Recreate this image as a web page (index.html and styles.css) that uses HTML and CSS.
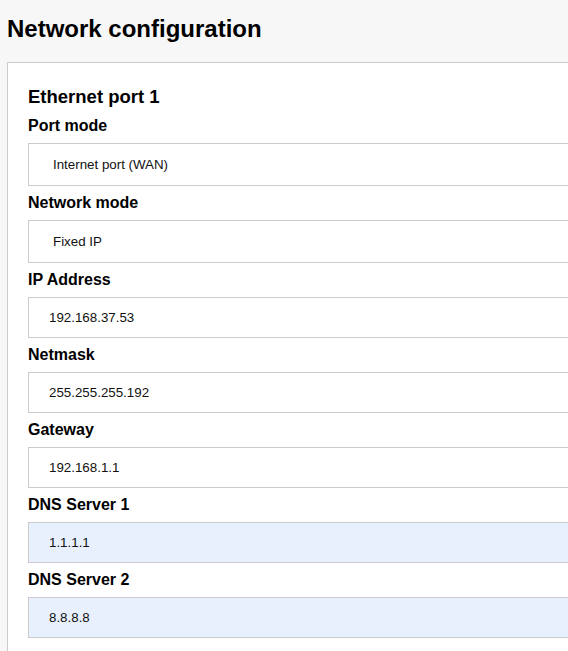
FILE: index.html
```html
<!DOCTYPE html>
<html lang="en">
<head>
<meta charset="utf-8">
<title>Network configuration</title>
<link rel="stylesheet" href="styles.css">
</head>
<body>
<div class="page">
  <h1 class="title">Network configuration</h1>
  <section class="card">
    <h2 class="section-title">Ethernet port 1</h2>
    <form class="form">
      <div class="field">
        <label class="label" for="port-mode">Port mode</label>
        <select class="control select" id="port-mode">
          <option>Internet port (WAN)</option>
        </select>
      </div>
      <div class="field">
        <label class="label" for="net-mode">Network mode</label>
        <select class="control select" id="net-mode">
          <option>Fixed IP</option>
        </select>
      </div>
      <div class="field">
        <label class="label" for="ip">IP Address</label>
        <input class="control" id="ip" type="text" value="192.168.37.53">
      </div>
      <div class="field">
        <label class="label" for="mask">Netmask</label>
        <input class="control" id="mask" type="text" value="255.255.255.192">
      </div>
      <div class="field">
        <label class="label" for="gw">Gateway</label>
        <input class="control" id="gw" type="text" value="192.168.1.1">
      </div>
      <div class="field">
        <label class="label" for="dns1">DNS Server 1</label>
        <input class="control autofill" id="dns1" type="text" value="1.1.1.1">
      </div>
      <div class="field">
        <label class="label" for="dns2">DNS Server 2</label>
        <input class="control autofill" id="dns2" type="text" value="8.8.8.8">
      </div>
    </form>
  </section>
</div>
</body>
</html>
```

FILE: styles.css
```css
html, body {
  margin: 0;
  padding: 0;
  overflow: hidden;
}

body {
  background: #f7f7f7;
  font-family: "Liberation Sans", Arial, sans-serif;
  color: #000;
}

.page {
  padding: 15px 0 0 7px;
}

.title {
  margin: 0 0 19px 0;
  font-size: 24px;
  font-weight: bold;
  line-height: 28px;
}

/* the card continues past the right edge of the window */
.card {
  background: #fff;
  border: 1px solid #cccccc;
  border-right: none;
  padding: 23px 0 40px 20px;
}

.section-title {
  margin: 0 0 10px 0;
  font-size: 18.5px;
  font-weight: bold;
  line-height: 21px;
}

.form {
  display: flex;
  flex-direction: column;
  gap: 8px;
}

.field {
  display: flex;
  flex-direction: column;
  gap: 8px;
}

.label {
  font-size: 16px;
  font-weight: bold;
  line-height: 18px;
}

.control {
  box-sizing: border-box;
  width: 100%;
  height: 41px;
  margin: 0;
  border: 1px solid #cccccc;
  border-right: none;
  border-radius: 0;
  background: #fff;
  padding: 0 0 0 20px;
  font-family: "Liberation Sans", Arial, sans-serif;
  font-size: 13.33px;
  color: #111;
  outline: none;
}

.select {
  height: 43px;
  padding-left: 24px;
  appearance: none;
  -webkit-appearance: none;
}

.autofill {
  background: #e8f0fe;
}
```
